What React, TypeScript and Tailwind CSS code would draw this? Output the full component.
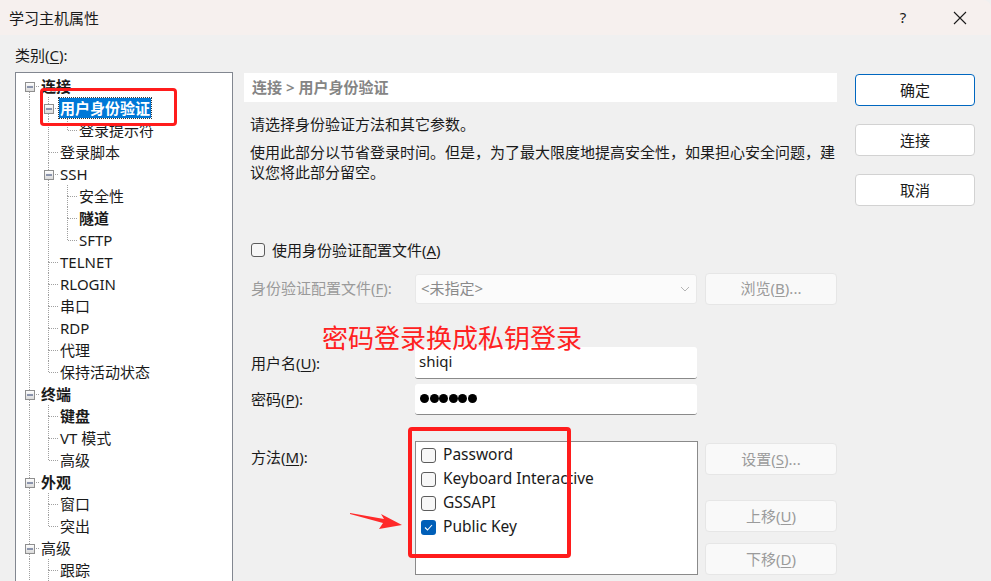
import React from "react";

type Row = {
  label: string;
  level: number;
  guides: boolean[];
  next: boolean;
  first?: boolean;
  bold?: boolean;
  exp?: boolean;
  selected?: boolean;
};

const rows: Row[] = [
  { label: "连接", level: 0, guides: [], next: true, first: true, bold: true, exp: true },
  { label: "用户身份验证", level: 1, guides: [true], next: true, bold: true, exp: true, selected: true },
  { label: "登录提示符", level: 2, guides: [true, true], next: false },
  { label: "登录脚本", level: 1, guides: [true], next: true },
  { label: "SSH", level: 1, guides: [true], next: true, exp: true },
  { label: "安全性", level: 2, guides: [true, true], next: true },
  { label: "隧道", level: 2, guides: [true, true], next: true, bold: true },
  { label: "SFTP", level: 2, guides: [true, true], next: false },
  { label: "TELNET", level: 1, guides: [true], next: true },
  { label: "RLOGIN", level: 1, guides: [true], next: true },
  { label: "串口", level: 1, guides: [true], next: true },
  { label: "RDP", level: 1, guides: [true], next: true },
  { label: "代理", level: 1, guides: [true], next: true },
  { label: "保持活动状态", level: 1, guides: [true], next: false },
  { label: "终端", level: 0, guides: [], next: true, bold: true, exp: true },
  { label: "键盘", level: 1, guides: [true], next: true, bold: true },
  { label: "VT 模式", level: 1, guides: [true], next: true },
  { label: "高级", level: 1, guides: [true], next: false },
  { label: "外观", level: 0, guides: [], next: true, bold: true, exp: true },
  { label: "窗口", level: 1, guides: [true], next: true },
  { label: "突出", level: 1, guides: [true], next: false },
  { label: "高级", level: 0, guides: [], next: true, exp: true },
  { label: "跟踪", level: 1, guides: [true], next: true },
];

const LINE = "#a0a0a0";

function GuideCell({ on }: { on: boolean }) {
  return (
    <svg width="19" height="22" className="shrink-0">
      {on && <line x1="9.5" y1="0" x2="9.5" y2="22" stroke={LINE} strokeDasharray="1 1" />}
    </svg>
  );
}

function NodeCell({ row }: { row: Row }) {
  return (
    <svg width="19" height="22" className="shrink-0">
      {!row.first && <line x1="9.5" y1="0" x2="9.5" y2="11" stroke={LINE} strokeDasharray="1 1" />}
      {row.next && <line x1="9.5" y1="11" x2="9.5" y2="22" stroke={LINE} strokeDasharray="1 1" />}
      <line x1="10" y1="11.5" x2="19" y2="11.5" stroke={LINE} strokeDasharray="1 1" />
      {row.exp && (
        <g>
          <defs>
            <linearGradient id="eg" x1="0" y1="0" x2="0" y2="1">
              <stop offset="0" stopColor="#ffffff" />
              <stop offset="1" stopColor="#d8d8d8" />
            </linearGradient>
          </defs>
          <rect x="5.5" y="7.5" width="9" height="9" fill="url(#eg)" stroke="#8f8f8f" />
          <line x1="7" y1="12" x2="13" y2="12" stroke="#2c3f6e" />
        </g>
      )}
    </svg>
  );
}

function Btn({ children, disabled, primary }: { children: React.ReactNode; disabled?: boolean; primary?: boolean }) {
  return (
    <div
      className={`w-full h-[32px] rounded-[4px] border flex items-center justify-center text-[15px] ${
        disabled
          ? "bg-[#f9f9f9] border-[#e6e6e6] text-[#9b9b9b]"
          : primary
          ? "bg-white border-[#0067c0] text-[#1a1a1a]"
          : "bg-white border-[#d2d2d2] text-[#1a1a1a]"
      }`}
    >
      {children}
    </div>
  );
}

function Check({ checked }: { checked?: boolean }) {
  return checked ? (
    <div className="w-[15px] h-[15px] rounded-[3px] bg-[#005fb8] flex items-center justify-center shrink-0">
      <svg width="9" height="7" viewBox="0 0 9 7">
        <path d="M1 3.5 L3.5 6 L8 1" fill="none" stroke="white" strokeWidth="1.1" />
      </svg>
    </div>
  ) : (
    <div className="w-[15px] h-[15px] rounded-[3px] border border-[#5c5c5c] bg-[#f7f7f7] shrink-0" />
  );
}

export default function App() {
  return (
    <div className="w-[991px] h-[581px] overflow-hidden bg-[#f0f0f0] flex flex-col text-[#1a1a1a] font-['Noto_Sans','Noto_Sans_CJK_SC',sans-serif] text-[15px]">
      {/* title bar */}
      <div className="h-[35px] bg-[#f6f0ee] flex items-center shrink-0 rounded-tr-[8px]">
        <span className="pl-[9px] text-[15px] leading-[20px]">学习主机属性</span>
        <span className="ml-auto w-[14px] text-center text-[15px] mr-[43px]">?</span>
        <svg width="14" height="14" viewBox="0 0 14 14" className="mr-[24px]">
          <path d="M1 1 L13 13 M13 1 L1 13" stroke="#1a1a1a" strokeWidth="1.1" />
        </svg>
      </div>

      <div className="flex flex-1 min-h-0">
        {/* left tree */}
        <div className="w-[233px] pl-[15px] flex flex-col shrink-0">
          <div className="mt-[10px] h-[20px] leading-[20px]">
            类别(<span className="underline underline-offset-2">C</span>):
          </div>
          <div className="relative mt-[7px] flex-1 bg-white border border-[#828790] border-b-0 pl-[4px] pt-[2px] overflow-hidden">
            {rows.map((r, i) => (
              <div key={i} className="flex items-center h-[22px]">
                {r.guides.map((g, j) => (
                  <GuideCell key={j} on={g} />
                ))}
                <NodeCell row={r} />
                <span
                  className={`ml-[1px] px-[1px] leading-[20px] whitespace-nowrap ${r.bold ? "font-bold" : ""} ${
                    r.selected ? "bg-[#0078d7] text-white outline outline-1 outline-dotted outline-[#3a3a3a]" : ""
                  }`}
                >
                  {r.label}
                </span>
              </div>
            ))}
            <div className="absolute left-[24px] top-[15px] w-[137px] h-[38px] border-[3px] border-[#ff1c1c] rounded-[4px]" />
          </div>
        </div>

        {/* middle */}
        <div className="relative ml-[11px] w-[593px] flex flex-col shrink-0">
          <div className="mt-[38px] h-[29px] bg-white pl-[8px] flex items-center text-[#858585] font-semibold">
            连接 &gt; 用户身份验证
          </div>
          <p className="mt-[12px] pl-[6px] leading-[20px]">请选择身份验证方法和其它参数。</p>
          <p className="mt-[8px] pl-[6px] leading-[20px]">
            使用此部分以节省登录时间。但是，为了最大限度地提高安全性，如果担心安全问题，建议您将此部分留空。
          </p>

          <div className="mt-[58px] pl-[7px] h-[20px] flex items-center gap-[7px]">
            <div className="w-[14px] h-[14px] rounded-[3px] border border-[#5c5c5c] bg-[#f7f7f7]" />
            <span>
              使用身份验证配置文件(<span className="underline underline-offset-2">A</span>)
            </span>
          </div>

          <div className="mt-[13px] h-[31px] flex items-center">
            <div className="w-[171px] pl-[7px] text-[#9a9a9a]">
              身份验证配置文件(<span className="underline underline-offset-2">F</span>):
            </div>
            <div className="w-[282px] h-[30px] bg-[#fbfbfb] border border-[#e8e8e8] rounded-[3px] flex items-center pl-[5px] pr-[6px] text-[#8a8a8a]">
              &lt;未指定&gt;
              <svg width="10" height="6" viewBox="0 0 10 6" className="ml-auto">
                <path d="M1 1 L5 5 L9 1" fill="none" stroke="#b5b5b5" />
              </svg>
            </div>
            <div className="ml-[8px] w-[132px]">
              <Btn disabled>
                浏览(<span className="underline underline-offset-2">B</span>)...
              </Btn>
            </div>
          </div>

          <div className="mt-[43px] h-[32px] flex items-center">
            <div className="w-[171px] pl-[7px]">
              用户名(<span className="underline underline-offset-2">U</span>):
            </div>
            <div className="w-[282px] h-[32px] bg-white border-b border-[#8a8a8a] rounded-[3px] flex items-center pl-[4px] pb-[3px] leading-[20px]">
              shiqi
            </div>
          </div>
          <div className="mt-[5px] h-[31px] flex items-center">
            <div className="w-[171px] pl-[7px]">
              密码(<span className="underline underline-offset-2">P</span>):
            </div>
            <div className="w-[282px] h-[31px] bg-white border-b border-[#8a8a8a] rounded-[3px] flex items-center pl-[5px] pb-[2px]">
              {[0, 1, 2, 3, 4, 5].map((d) => (
                <span key={d} className="w-[9px] h-[9px] rounded-full bg-black mr-[0.6px]" />
              ))}
            </div>
          </div>

          <div className="mt-[26px] flex items-start">
            <div className="w-[171px] pl-[7px] pt-[5px]">
              方法(<span className="underline underline-offset-2">M</span>):
            </div>
            <div className="w-[283px] h-[134px] bg-white border border-[#8a8a8a] pl-[5px] pt-[1px] flex flex-col">
              {["Password", "Keyboard Interactive", "GSSAPI", "Public Key"].map((m) => (
                <div key={m} className="h-[24px] flex items-center gap-[7px]">
                  <Check checked={m === "Public Key"} />
                  <span className="text-[15.5px]">{m}</span>
                </div>
              ))}
            </div>
            <div className="ml-[7px] w-[132px] flex flex-col">
              <div className="mt-[2px]">
                <Btn disabled>
                  设置(<span className="underline underline-offset-2">S</span>)...
                </Btn>
              </div>
              <div className="mt-[25px]">
                <Btn disabled>
                  上移(<span className="underline underline-offset-2">U</span>)
                </Btn>
              </div>
              <div className="mt-[11px]">
                <Btn disabled>
                  下移(<span className="underline underline-offset-2">D</span>)
                </Btn>
              </div>
            </div>
          </div>

          {/* annotations */}
          <div className="absolute left-[78px] top-[291px] text-[26px] leading-[24px] text-[#ff2121] whitespace-nowrap">
            密码登录换成私钥登录
          </div>
          <div className="absolute left-[164px] top-[392px] w-[163px] h-[131px] border-[4px] border-[#ff1c1c] rounded-[4px]" />
          <svg className="absolute left-[104px] top-[474px]" width="60" height="24" viewBox="0 0 60 24">
            <polygon points="2,4 36,10 33,5 54,16 31,20 35,14 2,5" fill="#ff2a2a" />
          </svg>
        </div>

        {/* right buttons */}
        <div className="ml-[18px] w-[120px] flex flex-col gap-[18px] pt-[39px] shrink-0">
          <Btn primary>确定</Btn>
          <Btn>连接</Btn>
          <Btn>取消</Btn>
        </div>
      </div>
    </div>
  );
}
